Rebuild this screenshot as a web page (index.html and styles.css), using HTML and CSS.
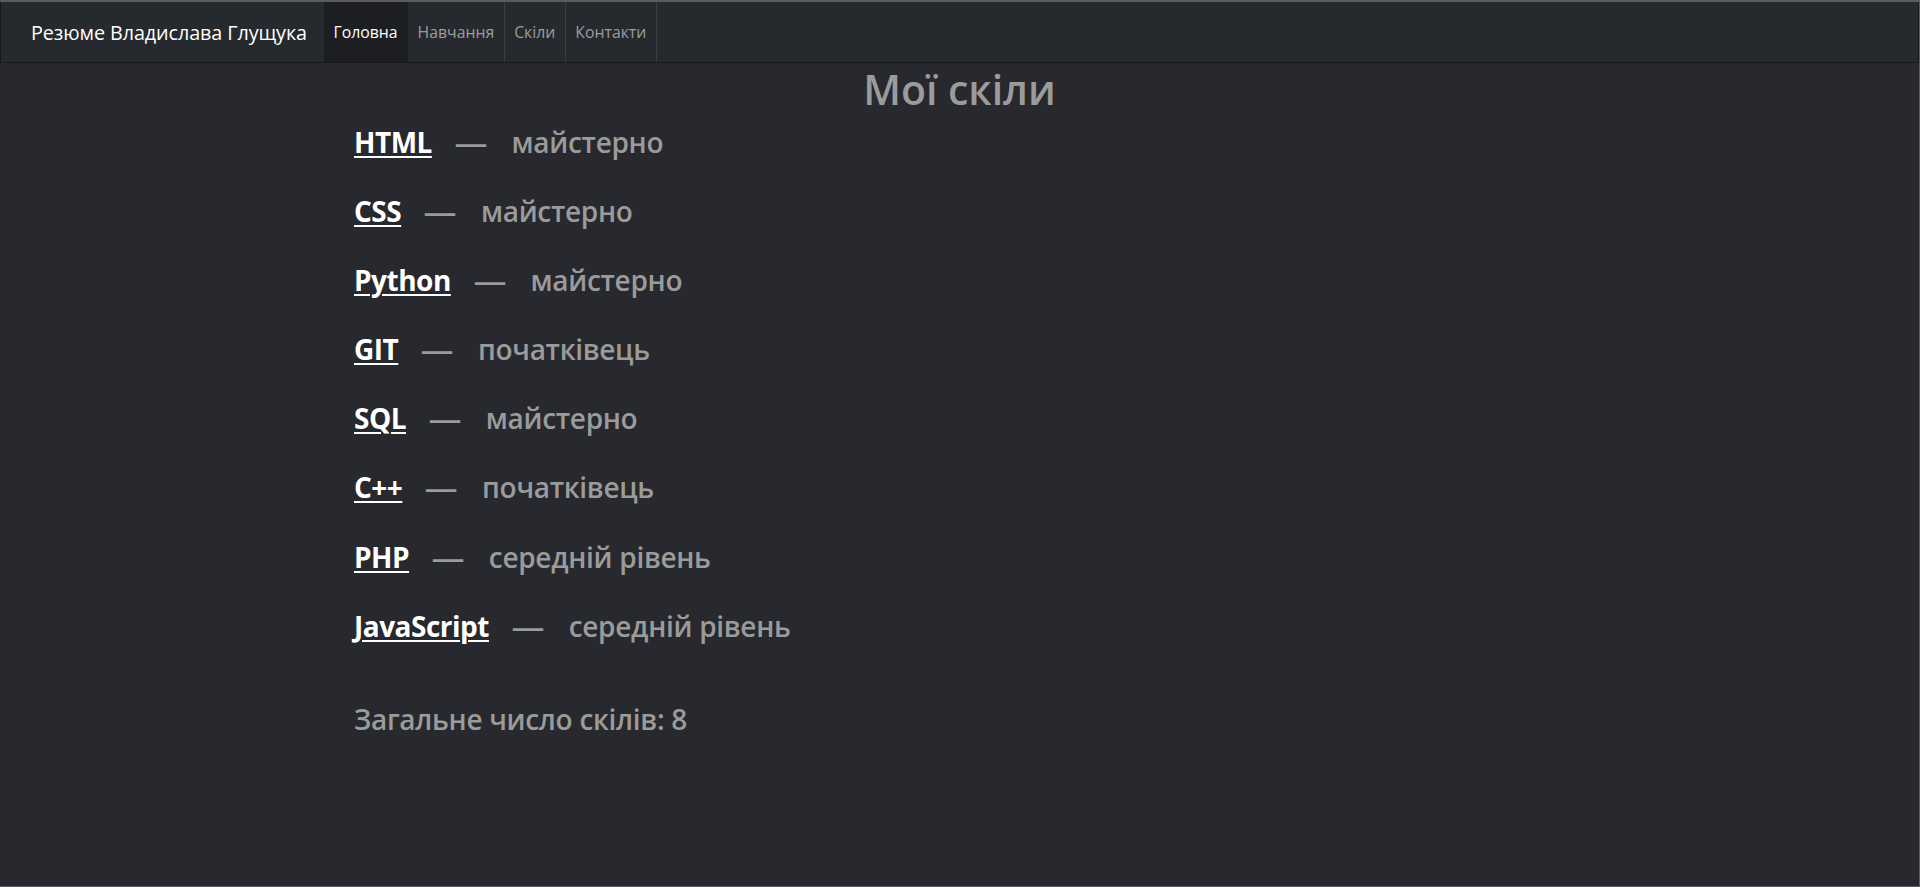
FILE: index.html
```html
<!DOCTYPE html>
<html lang="uk">
<head>
<meta charset="utf-8">
<title>Резюме Владислава Глущука</title>
<link rel="stylesheet" href="styles.css">
</head>
<body>
<div class="frame">
  <nav class="navbar">
    <a class="brand" href="#">Резюме Владислава Глущука</a>
    <ul class="nav">
      <li class="nav-item active"><a href="#">Головна</a></li>
      <li class="nav-item"><a href="#">Навчання</a></li>
      <li class="nav-item"><a href="#">Скіли</a></li>
      <li class="nav-item"><a href="#">Контакти</a></li>
    </ul>
  </nav>
  <main class="main">
    <h1 class="title">Мої скіли</h1>
    <div class="content">
      <ul class="skills">
        <li class="skill"><a href="#">HTML</a><span class="dash">—</span><span class="level">майстерно</span></li>
        <li class="skill"><a href="#">CSS</a><span class="dash">—</span><span class="level">майстерно</span></li>
        <li class="skill"><a href="#">Python</a><span class="dash">—</span><span class="level">майстерно</span></li>
        <li class="skill"><a href="#">GIT</a><span class="dash">—</span><span class="level">початківець</span></li>
        <li class="skill"><a href="#">SQL</a><span class="dash">—</span><span class="level">майстерно</span></li>
        <li class="skill"><a href="#">C++</a><span class="dash">—</span><span class="level">початківець</span></li>
        <li class="skill"><a href="#">PHP</a><span class="dash">—</span><span class="level">середній рівень</span></li>
        <li class="skill"><a href="#">JavaScript</a><span class="dash">—</span><span class="level">середній рівень</span></li>
      </ul>
      <p class="total">Загальне число скілів: 8</p>
    </div>
  </main>
</div>
</body>
</html>
```

FILE: styles.css
```css
* { box-sizing: border-box; }
html, body { margin: 0; padding: 0; height: 100%; }
body {
  background: #27292e;
  font-family: "Open Sans", "Noto Sans", sans-serif;
  color: #9b9b9b;
}
.frame {
  min-height: 100%;
  border-top: 2px solid #5c5c5c;
  border-right: 1px solid #5c5c5c;
  border-bottom: 1px solid #5c5c5c;
  background: #27292e;
}
.navbar {
  display: flex;
  align-items: stretch;
  height: 61px;
  background: #26292d;
  border: 1px solid #17191b;
  border-top: 0;
}
.brand {
  display: flex;
  align-items: center;
  padding: 0 17px 0 30px;
  color: #ffffff;
  text-decoration: none;
  font-size: 19.8px;
  letter-spacing: -0.1px;
}
.nav {
  display: flex;
  margin: 0;
  padding: 0;
  list-style: none;
}
.nav-item {
  display: flex;
  border-right: 1px solid #3a3d42;
}
.nav-item a {
  display: flex;
  align-items: center;
  padding: 0 9.5px;
  color: #9d9d9d;
  text-decoration: none;
  font-size: 15.8px;
}
.nav-item.active { background: #1c1e21; border-right-color: #1c1e21; }
.nav-item.active a { color: #ffffff; }
.title {
  margin: 0;
  padding-top: 1px;
  text-align: center;
  font-size: 41px;
  line-height: 50px;
  font-weight: 600;
  color: #9b9b9b;
}
.content { padding-left: 354px; }
.skills {
  list-style: none;
  margin: 8px 0 0;
  padding: 0;
}
.skill {
  display: flex;
  align-items: baseline;
  font-size: 28px;
  line-height: 40px;
  font-weight: 600;
  margin-bottom: 29.1px;
  letter-spacing: -0.3px;
}
.skill a {
  color: #ffffff;
  font-weight: 700;
  letter-spacing: -0.5px;
  text-decoration: underline;
  text-decoration-thickness: 2px;
  text-underline-offset: 3px;
}
.dash {
  display: inline-block;
  margin: 0 27px 0 25px;
  transform: scaleX(1.18);
}
.total {
  margin: 53px 0 0;
  font-size: 28px;
  line-height: 40px;
  font-weight: 600;
  letter-spacing: -0.3px;
}
```
